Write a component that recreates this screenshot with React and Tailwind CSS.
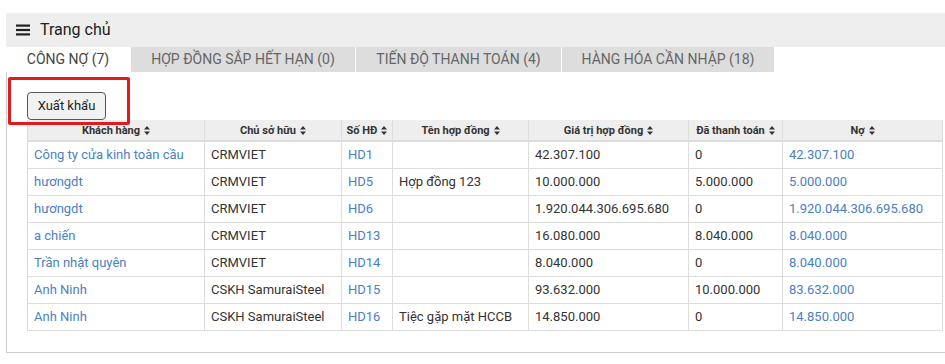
import React from 'react';

const tabs = [
  { label: 'CÔNG NỢ (7)', w: 'w-[124px]', active: true },
  { label: 'HỢP ĐỒNG SẮP HẾT HẠN (0)', w: 'w-[224px]' },
  { label: 'TIẾN ĐỘ THANH TOÁN (4)', w: 'w-[205px]' },
  { label: 'HÀNG HÓA CẦN NHẬP (18)', w: 'w-[212px]' },
];

const cols = [
  { label: 'Khách hàng', w: 'w-[177px]' },
  { label: 'Chủ sở hữu', w: 'w-[137px]' },
  { label: 'Số HĐ', w: 'w-[51px]' },
  { label: 'Tên hợp đồng', w: 'w-[136px]' },
  { label: 'Giá trị hợp đồng', w: 'w-[160px]' },
  { label: 'Đã thanh toán', w: 'w-[94px]' },
  { label: 'Nợ', w: 'w-[160px]' },
];

const rows = [
  ['Công ty cửa kinh toàn cầu', 'CRMVIET', 'HD1', '', '42.307.100', '0', '42.307.100'],
  ['hươngdt', 'CRMVIET', 'HD5', 'Hợp đồng 123', '10.000.000', '5.000.000', '5.000.000'],
  ['hươngdt', 'CRMVIET', 'HD6', '', '1.920.044.306.695.680', '0', '1.920.044.306.695.680'],
  ['a chiến', 'CRMVIET', 'HD13', '', '16.080.000', '8.040.000', '8.040.000'],
  ['Trần nhật quyên', 'CRMVIET', 'HD14', '', '8.040.000', '0', '8.040.000'],
  ['Anh Ninh', 'CSKH SamuraiSteel', 'HD15', '', '93.632.000', '10.000.000', '83.632.000'],
  ['Anh Ninh', 'CSKH SamuraiSteel', 'HD16', 'Tiệc gặp mặt HCCB', '14.850.000', '0', '14.850.000'],
];

const linkCols = [0, 2, 6];

function SortIcon() {
  return (
    <svg width="6" height="9" viewBox="0 0 6 9" className="shrink-0">
      <path d="M3 0 L6 3.5 L0 3.5 Z M3 9 L6 5.5 L0 5.5 Z" fill="#333" />
    </svg>
  );
}

export default function App() {
  return (
    <div className="w-[945px] h-[364px] overflow-hidden bg-white pt-[13px] pl-[6px] font-['Roboto','Liberation_Sans',sans-serif] text-[#333]">
      <div className="h-[34px] bg-[#eeeeee] flex items-center pl-[10px]">
        <svg width="14" height="12" viewBox="0 0 14 12" className="mr-[10px]">
          <rect x="0" y="0.5" width="14" height="2.2" fill="#222" />
          <rect x="0" y="4.9" width="14" height="2.2" fill="#222" />
          <rect x="0" y="9.3" width="14" height="2.2" fill="#222" />
        </svg>
        <span className="text-[16px] text-[#222]">Trang chủ</span>
      </div>

      <div className="flex gap-px h-[25px]">
        {tabs.map((t) => (
          <div
            key={t.label}
            className={`${t.w} flex items-center justify-center text-[14px] ${
              t.active ? 'bg-white text-[#444]' : 'bg-[#dddddd] text-[#666]'
            }`}
          >
            {t.label}
          </div>
        ))}
      </div>

      <div className="relative border-l border-b border-[#cccccc] pl-[20px] pt-[20px] pb-[21px]">
        <button className="h-[28px] w-[79px] rounded-[4px] border border-[#555] bg-[#f2f2f2] text-[13px] text-[#222]">
          Xuất khẩu
        </button>
        <div className="absolute left-px top-[5px] w-[122px] h-[48px] border-[3px] border-[#e3191b] rounded-[2px]" />

        <table className="w-[916px] border-collapse text-[13px] table-fixed">
          <thead>
            <tr className="h-[21px] bg-[#eeeeee]">
              {cols.map((c) => (
                <th
                  key={c.label}
                  className={`${c.w} border-x border-[#dddddd] border-b-2 border-b-[#dddddd] p-0`}
                >
                  <div className="flex items-center justify-center gap-[4px] text-[11px] font-bold text-[#333] leading-none whitespace-nowrap">
                    <span>{c.label}</span>
                    <SortIcon />
                  </div>
                </th>
              ))}
            </tr>
          </thead>
          <tbody>
            {rows.map((r, i) => (
              <tr key={i} className="h-[27px]">
                {r.map((v, j) => (
                  <td
                    key={j}
                    className={`border border-[#dddddd] px-[6px] py-0 whitespace-nowrap ${
                      linkCols.includes(j) ? 'text-[#4a80c8]' : 'text-[#333]'
                    }`}
                  >
                    {v}
                  </td>
                ))}
              </tr>
            ))}
          </tbody>
        </table>
      </div>
    </div>
  );
}
